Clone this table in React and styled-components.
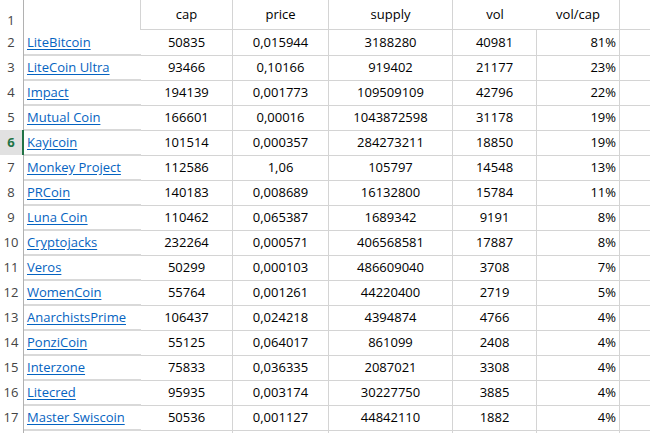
import React from "react";
import styled, { createGlobalStyle, css } from "styled-components";

const GlobalStyle = createGlobalStyle`
  html, body { margin: 0; padding: 0; background: #ffffff; overflow: hidden; }
  body { font-family: "Open Sans", "Liberation Sans", sans-serif; }
`;

const COLS = "24px 117px 92px 96px 124px 84px 83px 1fr";
const GRID = "#d4d4d4";

const Sheet = styled.div`
  width: 650px;
  height: 433px;
  overflow: hidden;
  font-size: 13px;
  color: #000;
`;

const Row = styled.div`
  display: grid;
  grid-template-columns: ${COLS};
  height: ${(p) => p.$h}px;
`;

const RowHead = styled.div`
  box-sizing: border-box;
  border-right: ${(p) => (p.$sel ? "2px solid #217346" : "1px solid #b1b1b1")};
  background: ${(p) => (p.$sel ? "#e1e1e1" : "#ffffff")};
  color: ${(p) => (p.$sel ? "#217346" : "#444444")};
  font-weight: ${(p) => (p.$sel ? 700 : 400)};
  text-align: center;
  line-height: ${(p) => p.$lh}px;
  padding-right: ${(p) => (p.$sel ? 0 : 1)}px;
  overflow: hidden;
`;

const HeadCell = styled.div`
  box-sizing: border-box;
  border-right: ${(p) => (p.$noRight ? "none" : `1px solid ${GRID}`)};
  border-bottom: ${(p) => (p.$noBottom ? "none" : `1px solid ${GRID}`)};
  text-align: center;
  line-height: 28px;
`;

const NameCell = styled.div`
  box-sizing: border-box;
  border-bottom: 2px solid #d9d9d9;
  padding-left: 3px;
  line-height: 24px;
  white-space: nowrap;
`;

const Link = styled.a`
  color: #0563c1;
  text-decoration: underline;
  text-underline-offset: 2px;
  cursor: pointer;
`;

const Cell = styled.div`
  box-sizing: border-box;
  border-right: ${(p) => (p.$noRight ? "none" : `1px solid ${GRID}`)};
  border-bottom: 1px solid ${GRID};
  line-height: 24px;
  white-space: nowrap;
  ${(p) =>
    p.$right
      ? css`
          text-align: right;
          padding-right: 3px;
        `
      : css`
          text-align: center;
        `}
`;

const data = [
  ["LiteBitcoin", "50835", "0,015944", "3188280", "40981", "81%"],
  ["LiteCoin Ultra", "93466", "0,10166", "919402", "21177", "23%"],
  ["Impact", "194139", "0,001773", "109509109", "42796", "22%"],
  ["Mutual Coin", "166601", "0,00016", "1043872598", "31178", "19%"],
  ["Kayicoin", "101514", "0,000357", "284273211", "18850", "19%"],
  ["Monkey Project", "112586", "1,06", "105797", "14548", "13%"],
  ["PRCoin", "140183", "0,008689", "16132800", "15784", "11%"],
  ["Luna Coin", "110462", "0,065387", "1689342", "9191", "8%"],
  ["Cryptojacks", "232264", "0,000571", "406568581", "17887", "8%"],
  ["Veros", "50299", "0,000103", "486609040", "3708", "7%"],
  ["WomenCoin", "55764", "0,001261", "44220400", "2719", "5%"],
  ["AnarchistsPrime", "106437", "0,024218", "4394874", "4766", "4%"],
  ["PonziCoin", "55125", "0,064017", "861099", "2408", "4%"],
  ["Interzone", "75833", "0,036335", "2087021", "3308", "4%"],
  ["Litecred", "95935", "0,003174", "30227750", "3885", "4%"],
  ["Master Swiscoin", "50536", "0,001127", "44842110", "1882", "4%"],
];

export default function App() {
  return (
    <>
      <GlobalStyle />
      <Sheet>
        <Row $h={30}>
          <RowHead $lh={40}>1</RowHead>
          <HeadCell $noBottom />
          <HeadCell>cap</HeadCell>
          <HeadCell>price</HeadCell>
          <HeadCell>supply</HeadCell>
          <HeadCell $noRight>vol</HeadCell>
          <HeadCell>vol/cap</HeadCell>
          <HeadCell $noRight />
        </Row>
        {data.map((r, i) => (
          <Row $h={25} key={r[0]}>
            <RowHead $lh={25} $sel={i + 2 === 6}>
              {i + 2}
            </RowHead>
            <NameCell>
              <Link>{r[0]}</Link>
            </NameCell>
            <Cell>{r[1]}</Cell>
            <Cell>{r[2]}</Cell>
            <Cell>{r[3]}</Cell>
            <Cell>{r[4]}</Cell>
            <Cell $right>{r[5]}</Cell>
            <Cell $noRight />
          </Row>
        ))}
        <Row $h={25}>
          <RowHead $lh={25} />
          <NameCell />
          <Cell />
          <Cell />
          <Cell />
          <Cell />
          <Cell />
          <Cell $noRight />
        </Row>
      </Sheet>
    </>
  );
}
